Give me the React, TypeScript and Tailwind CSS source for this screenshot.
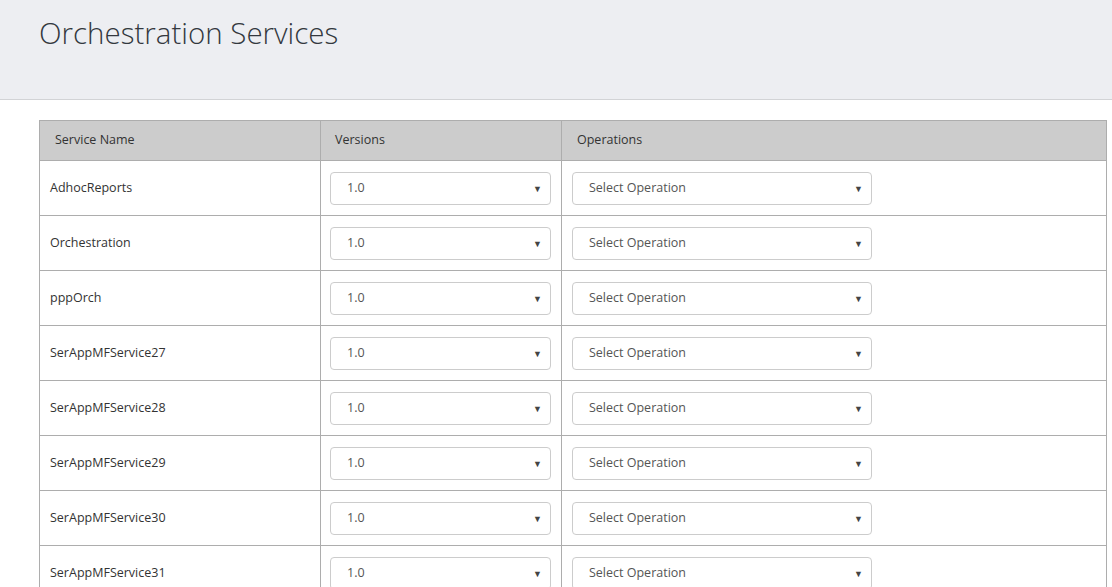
import React from 'react';

const services = [
  'AdhocReports',
  'Orchestration',
  'pppOrch',
  'SerAppMFService27',
  'SerAppMFService28',
  'SerAppMFService29',
  'SerAppMFService30',
  'SerAppMFService31',
];

const FakeSelect: React.FC<{ label: string; width: string }> = ({ label, width }) => (
  <div
    className={`${width} h-[33px] flex items-center justify-between pl-4 pr-[8px] pt-px bg-white border border-[#cccccc] rounded-[4px] text-[12.5px] text-[#555555]`}
  >
    <span>{label}</span>
    <span className="text-[9px] text-[#444444]">▼</span>
  </div>
);

export default function App() {
  return (
    <div className="w-[1112px] h-[587px] overflow-hidden bg-white font-['Open_Sans',sans-serif] text-[#333333]">
      <div className="h-[100px] bg-[#edeef2] border-b border-[#d2d3d6] pl-[39px] pt-[13px]">
        <h1 className="text-[29.5px] font-light leading-[40px] text-[#33383e]">
          Orchestration Services
        </h1>
      </div>

      <div className="pt-[20px] pl-[39px] pr-[5px]">
        <table className="w-[1068px] border-collapse text-[12.5px] table-fixed">
          <colgroup>
            <col className="w-[281px]" />
            <col className="w-[241px]" />
            <col />
          </colgroup>
          <thead>
            <tr className="h-[40px] bg-[#cccccc]">
              <th className="border border-[#adadad] text-left font-normal pl-[15px]">Service Name</th>
              <th className="border border-[#adadad] text-left font-normal pl-[14px]">Versions</th>
              <th className="border border-[#adadad] text-left font-normal pl-[15px]">Operations</th>
            </tr>
          </thead>
          <tbody>
            {services.map((name) => (
              <tr key={name} className="h-[55px]">
                <td className="border border-[#adadad] pl-[10px] align-middle">{name}</td>
                <td className="border border-[#adadad] pl-[9px] align-middle">
                  <FakeSelect label="1.0" width="w-[221px]" />
                </td>
                <td className="border border-[#adadad] pl-[10px] align-middle">
                  <FakeSelect label="Select Operation" width="w-[300px]" />
                </td>
              </tr>
            ))}
          </tbody>
        </table>
      </div>
    </div>
  );
}
